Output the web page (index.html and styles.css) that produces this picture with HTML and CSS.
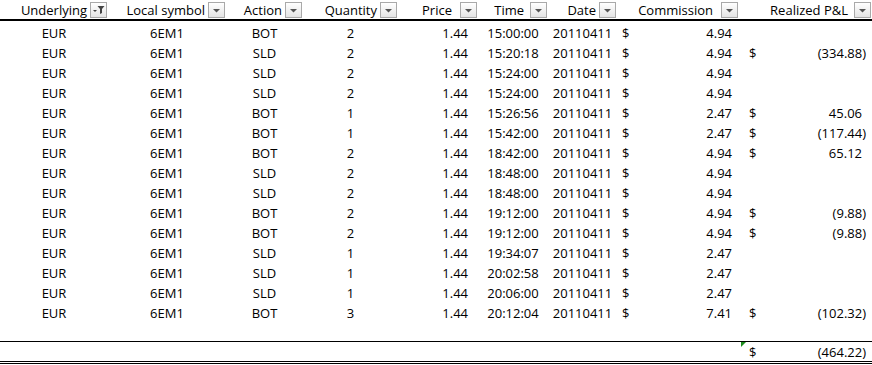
FILE: index.html
```html
<!DOCTYPE html>
<html>
<head>
<meta charset="utf-8">
<link rel="stylesheet" href="styles.css">
</head>
<body>
<div class="sheet">
  <div class="row head">
    <div class="hc"><span>Underlying</span><span class="btn"><svg width="17" height="16" viewBox="0 0 17 16"><polygon points="3,8 7,8 5,10" fill="#444"/><polygon points="7.5,4 14.5,4 12,7 12,11 10,12 10,7" fill="#444"/></svg></span></div>
    <div class="hc"><span>Local symbol</span><span class="btn"><svg width="17" height="16" viewBox="0 0 17 16"><polygon points="5,7 12,7 8.5,10.5" fill="#555"/></svg></span></div>
    <div class="hc"><span>Action</span><span class="btn"><svg width="17" height="16" viewBox="0 0 17 16"><polygon points="5,7 12,7 8.5,10.5" fill="#555"/></svg></span></div>
    <div class="hc"><span>Quantity</span><span class="btn"><svg width="17" height="16" viewBox="0 0 17 16"><polygon points="5,7 12,7 8.5,10.5" fill="#555"/></svg></span></div>
    <div class="hc wide"><span>Price</span><span class="btn"><svg width="17" height="16" viewBox="0 0 17 16"><polygon points="5,7 12,7 8.5,10.5" fill="#555"/></svg></span></div>
    <div class="hc mid"><span>Time</span><span class="btn"><svg width="17" height="16" viewBox="0 0 17 16"><polygon points="5,7 12,7 8.5,10.5" fill="#555"/></svg></span></div>
    <div class="hc"><span>Date</span><span class="btn"><svg width="17" height="16" viewBox="0 0 17 16"><polygon points="5,7 12,7 8.5,10.5" fill="#555"/></svg></span></div>
    <div class="hc wide"><span>Commission</span><span class="btn"><svg width="17" height="16" viewBox="0 0 17 16"><polygon points="5,7 12,7 8.5,10.5" fill="#555"/></svg></span></div>
    <div class="hc mid"><span>Realized P&amp;L</span><span class="btn"><svg width="17" height="16" viewBox="0 0 17 16"><polygon points="5,7 12,7 8.5,10.5" fill="#555"/></svg></span></div>
  </div>

  <div class="row"><div class="c">EUR</div><div class="c">6EM1</div><div class="c">BOT</div><div class="c">2</div><div class="price">1.44</div><div class="c">15:00:00</div><div class="c">20110411</div><div class="acc com"><span>$</span><span>4.94</span></div><div class="acc pl"></div></div>
  <div class="row"><div class="c">EUR</div><div class="c">6EM1</div><div class="c">SLD</div><div class="c">2</div><div class="price">1.44</div><div class="c">15:20:18</div><div class="c">20110411</div><div class="acc com"><span>$</span><span>4.94</span></div><div class="acc pl"><span>$</span><span>(334.88)</span></div></div>
  <div class="row"><div class="c">EUR</div><div class="c">6EM1</div><div class="c">SLD</div><div class="c">2</div><div class="price">1.44</div><div class="c">15:24:00</div><div class="c">20110411</div><div class="acc com"><span>$</span><span>4.94</span></div><div class="acc pl"></div></div>
  <div class="row"><div class="c">EUR</div><div class="c">6EM1</div><div class="c">SLD</div><div class="c">2</div><div class="price">1.44</div><div class="c">15:24:00</div><div class="c">20110411</div><div class="acc com"><span>$</span><span>4.94</span></div><div class="acc pl"></div></div>
  <div class="row"><div class="c">EUR</div><div class="c">6EM1</div><div class="c">BOT</div><div class="c">1</div><div class="price">1.44</div><div class="c">15:26:56</div><div class="c">20110411</div><div class="acc com"><span>$</span><span>2.47</span></div><div class="acc pl pos"><span>$</span><span>45.06</span></div></div>
  <div class="row"><div class="c">EUR</div><div class="c">6EM1</div><div class="c">BOT</div><div class="c">1</div><div class="price">1.44</div><div class="c">15:42:00</div><div class="c">20110411</div><div class="acc com"><span>$</span><span>2.47</span></div><div class="acc pl"><span>$</span><span>(117.44)</span></div></div>
  <div class="row"><div class="c">EUR</div><div class="c">6EM1</div><div class="c">BOT</div><div class="c">2</div><div class="price">1.44</div><div class="c">18:42:00</div><div class="c">20110411</div><div class="acc com"><span>$</span><span>4.94</span></div><div class="acc pl pos"><span>$</span><span>65.12</span></div></div>
  <div class="row"><div class="c">EUR</div><div class="c">6EM1</div><div class="c">SLD</div><div class="c">2</div><div class="price">1.44</div><div class="c">18:48:00</div><div class="c">20110411</div><div class="acc com"><span>$</span><span>4.94</span></div><div class="acc pl"></div></div>
  <div class="row"><div class="c">EUR</div><div class="c">6EM1</div><div class="c">SLD</div><div class="c">2</div><div class="price">1.44</div><div class="c">18:48:00</div><div class="c">20110411</div><div class="acc com"><span>$</span><span>4.94</span></div><div class="acc pl"></div></div>
  <div class="row"><div class="c">EUR</div><div class="c">6EM1</div><div class="c">BOT</div><div class="c">2</div><div class="price">1.44</div><div class="c">19:12:00</div><div class="c">20110411</div><div class="acc com"><span>$</span><span>4.94</span></div><div class="acc pl"><span>$</span><span>(9.88)</span></div></div>
  <div class="row"><div class="c">EUR</div><div class="c">6EM1</div><div class="c">BOT</div><div class="c">2</div><div class="price">1.44</div><div class="c">19:12:00</div><div class="c">20110411</div><div class="acc com"><span>$</span><span>4.94</span></div><div class="acc pl"><span>$</span><span>(9.88)</span></div></div>
  <div class="row"><div class="c">EUR</div><div class="c">6EM1</div><div class="c">SLD</div><div class="c">1</div><div class="price">1.44</div><div class="c">19:34:07</div><div class="c">20110411</div><div class="acc com"><span>$</span><span>2.47</span></div><div class="acc pl"></div></div>
  <div class="row"><div class="c">EUR</div><div class="c">6EM1</div><div class="c">SLD</div><div class="c">1</div><div class="price">1.44</div><div class="c">20:02:58</div><div class="c">20110411</div><div class="acc com"><span>$</span><span>2.47</span></div><div class="acc pl"></div></div>
  <div class="row"><div class="c">EUR</div><div class="c">6EM1</div><div class="c">SLD</div><div class="c">1</div><div class="price">1.44</div><div class="c">20:06:00</div><div class="c">20110411</div><div class="acc com"><span>$</span><span>2.47</span></div><div class="acc pl"></div></div>
  <div class="row"><div class="c">EUR</div><div class="c">6EM1</div><div class="c">BOT</div><div class="c">3</div><div class="price">1.44</div><div class="c">20:12:04</div><div class="c">20110411</div><div class="acc com"><span>$</span><span>7.41</span></div><div class="acc pl"><span>$</span><span>(102.32)</span></div></div>

  <div class="row empty"></div>

  <div class="row total">
    <div></div><div></div><div></div><div></div><div></div><div></div><div></div><div></div>
    <div class="acc pl flag"><span>$</span><span>(464.22)</span></div>
  </div>
</div>
</body>
</html>
```

FILE: styles.css
```css
html, body {
  margin: 0;
  padding: 0;
  background: #fff;
}

.sheet {
  width: 872px;
  font-family: "Open Sans", "Liberation Sans", sans-serif;
  font-size: 13px;
  color: #000;
}

.row {
  display: grid;
  grid-template-columns: 108px 118px 77px 95px 80px 70px 69px 122px 133px;
  height: 20px;
  line-height: 20px;
}

.row > div {
  box-sizing: border-box;
  padding-top: 2px;
  white-space: nowrap;
}

.head {
  height: 19px;
  border-bottom: 2px solid #000;
}

.head .hc {
  display: flex;
  justify-content: flex-end;
  align-items: flex-start;
  gap: 3px;
  padding-top: 0;
  padding-right: 1px;
}

.head .hc > span:first-child {
  line-height: 20px;
  margin-top: 0;
}

.head .hc.wide { gap: 8px; }
.head .hc.mid { gap: 6px; }

.btn {
  display: block;
  width: 17px;
  height: 16px;
  margin-top: 2px;
  box-sizing: border-box;
  border: 1px solid #a9a9a9;
  background: linear-gradient(#ffffff, #e4e4e4);
}

.btn svg {
  display: block;
  margin: -1px 0 0 -1px;
}

.c { text-align: center; }

.price {
  text-align: right;
  padding-right: 10px;
}

.acc {
  display: flex;
  justify-content: space-between;
}

.com {
  padding-left: 5px;
  padding-right: 7px;
}

.pl {
  padding-left: 10px;
  padding-right: 6px;
}

.pl.pos {
  padding-right: 10px;
}

.empty { height: 20px; }

.total {
  height: 23px;
  border-top: 1px solid #000;
  border-bottom: 3px double #000;
  box-sizing: border-box;
}

.total > div {
  padding-top: 0;
}

.flag {
  position: relative;
}

.flag::before {
  content: "";
  position: absolute;
  left: 2px;
  top: 0;
  width: 0;
  height: 0;
  border-top: 5px solid #1e8c1e;
  border-right: 5px solid transparent;
}
```
